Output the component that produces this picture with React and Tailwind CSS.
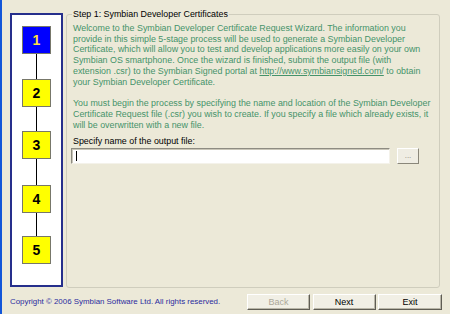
import React from "react"

const steps = [1, 2, 3, 4, 5]
// connector heights between the step boxes, read off the screenshot
const gaps = [25, 24, 26, 23]

function StepBox({ n, active }) {
  return (
    <div
      className={`w-[29px] h-[28px] border border-[#77776a] flex items-center justify-center text-[14px] font-bold leading-none ${
        active ? "bg-[#0000ff] text-[#ffe040]" : "bg-[#ffff00] text-black"
      }`}
    >
      {n}
    </div>
  )
}

function WinButton({ children, disabled, className = "" }) {
  return (
    <button
      className={`h-[16px] border border-t-white border-l-white border-b-[#5f5d54] border-r-[#5f5d54] bg-[#f1efe5] shadow-[inset_-1px_-1px_0_#b9b6a8] text-[9px] leading-none ${
        disabled ? "text-[#aca899]" : "text-black"
      } ${className}`}
    >
      {children}
    </button>
  )
}

export default function App() {
  return (
    <div className="w-[450px] h-[314px] overflow-hidden bg-[#ece9d8] border-l-2 border-[#1356d9] flex flex-col font-['Liberation_Sans',Arial,sans-serif]">
      {/* Main area */}
      <div className="flex pt-[13px] pl-[8px]">
        {/* Step list */}
        <div className="w-[53px] h-[274px] border-2 border-[#262f8c] bg-white flex flex-col items-center pt-[11px]">
          {steps.map((n, i) => (
            <React.Fragment key={n}>
              <StepBox n={n} active={n === 1} />
              {i < gaps.length && <div className="w-px bg-black" style={{ height: gaps[i] }} />}
            </React.Fragment>
          ))}
        </div>

        {/* Group box */}
        <div className="ml-[3px] mt-[1px] w-[374px] h-[274px] border border-[#cfcdbd] rounded-[3px] flex flex-col pl-[6px] text-[8.9px] leading-[10.8px]">
          <div className="-mt-[6px] -ml-[1px] self-start bg-[#ece9d8] px-[1px] text-black">
            Step 1: Symbian Developer Certificates
          </div>

          <div className="mt-[3px] text-[#45936a] whitespace-nowrap">
            <p>
              Welcome to the Symbian Developer Certificate Request Wizard. The information you
              <br />
              provide in this simple 5-stage process will be used to generate a Symbian Developer
              <br />
              Certificate, which will allow you to test and develop applications more easily on your own
              <br />
              Symbian OS smartphone. Once the wizard is finished, submit the output file (with
              <br />
              extension .csr) to the Symbian Signed portal at <span className="underline">http://www.symbiansigned.com/</span> to obtain
              <br />
              your Symbian Developer Certificate.
            </p>
            <p className="mt-[10.8px]">
              You must begin the process by specifying the name and location of the Symbian Developer
              <br />
              Certificate Request file (.csr) you wish to create. If you specify a file which already exists, it
              <br />
              will be overwritten with a new file.
            </p>
          </div>

          <div className="mt-[5px] text-black">Specify name of the output file:</div>

          <div className="mt-[1.5px] -ml-[2px] flex items-center gap-[7px]">
            <div className="w-[319px] h-[16px] bg-white border border-t-[#8e8c82] border-l-[#8e8c82] border-r-[#f4f2ea] border-b-[#f4f2ea] shadow-[inset_1px_1px_0_#c9c6b8] flex items-center">
              <span className="ml-[4px] w-px h-[10px] bg-black" />
            </div>
            <button className="w-[22px] h-[16px] border border-t-white border-l-white border-b-[#8a877a] border-r-[#8a877a] bg-[#efede3] text-[#8a887c] text-[8px] leading-none">
              ...
            </button>
          </div>
        </div>
      </div>

      {/* Footer */}
      <div className="flex items-center pl-[8px] pr-[8px] pt-[6px]">
        <span className="text-[7.9px] text-[#2b2b9e] font-medium">
          Copyright © 2006 Symbian Software Ltd. All rights reserved.
        </span>
        <div className="ml-auto flex gap-[2.5px]">
          <WinButton disabled className="w-[63px]">Back</WinButton>
          <WinButton className="w-[63px]">Next</WinButton>
          <WinButton className="w-[64px]">Exit</WinButton>
        </div>
      </div>
    </div>
  )
}
